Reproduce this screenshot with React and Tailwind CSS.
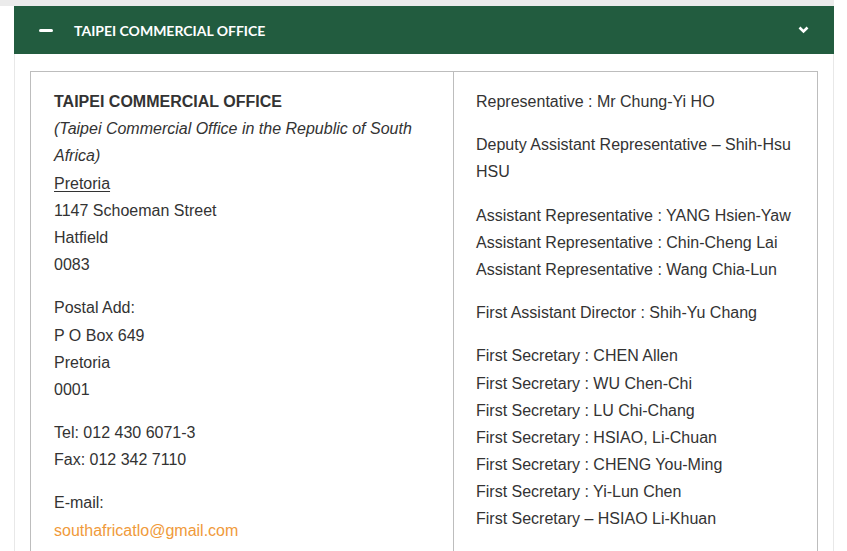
import React from 'react';

const leftBlocks = [
  [
    <strong key="t" className="font-bold">TAIPEI COMMERCIAL OFFICE</strong>,
    <em key="s">(Taipei Commercial Office in the Republic of South Africa)</em>,
    <span key="p" className="underline underline-offset-2">Pretoria</span>,
    '1147 Schoeman Street',
    'Hatfield',
    '0083',
  ],
  ['Postal Add:', 'P O Box 649', 'Pretoria', '0001'],
  ['Tel: 012 430 6071-3', 'Fax: 012 342 7110'],
  [
    'E-mail:',
    <a key="m" href="#" className="text-[#f09a3a]">southafricatlo@gmail.com</a>,
  ],
];

const rightBlocks = [
  ['Representative : Mr Chung-Yi HO'],
  ['Deputy Assistant Representative – Shih-Hsu HSU'],
  [
    'Assistant Representative : YANG Hsien-Yaw',
    'Assistant Representative : Chin-Cheng Lai',
    'Assistant Representative : Wang Chia-Lun',
  ],
  ['First Assistant Director : Shih-Yu Chang'],
  [
    'First Secretary : CHEN Allen',
    'First Secretary : WU Chen-Chi',
    'First Secretary : LU Chi-Chang',
    'First Secretary : HSIAO, Li-Chuan',
    'First Secretary : CHENG You-Ming',
    'First Secretary : Yi-Lun Chen',
    'First Secretary – HSIAO Li-Khuan',
  ],
];

const Blocks = ({ blocks }) => (
  <div className="flex flex-col gap-4">
    {blocks.map((lines, i) => (
      <p key={i}>
        {lines.map((line, j) => (
          <span key={j} className="block">
            {line}
          </span>
        ))}
      </p>
    ))}
  </div>
);

export default function App() {
  return (
    <div className="w-[847px] h-[551px] overflow-hidden bg-white">
      <div className="w-[834px] h-[6px] bg-[#ebebeb]" />
      <div className="ml-[14px] w-[820px]">
        {/* accordion header */}
        <div className="h-[48px] bg-[#225c3f] flex items-center pl-[25px] pr-[25px] text-white">
          <span className="w-[14px] h-[3px] bg-white rounded-sm" />
          <span
            className="ml-[21px] text-[14px] font-bold"
            style={{ fontFamily: 'Lato, "Open Sans", sans-serif' }}
          >
            TAIPEI COMMERCIAL OFFICE
          </span>
          <svg className="ml-auto" width="11" height="8" viewBox="0 0 11 8">
            <path d="M1.5 1.5 L5.5 5.5 L9.5 1.5" fill="none" stroke="white" strokeWidth="2.6" />
          </svg>
        </div>

        {/* accordion body */}
        <div className="border-x border-[#e8e8e8] pt-[17px] pl-[15px] pr-[15px] h-[600px]">
          <div
            className="grid grid-cols-[423px_1fr] border border-[#bdbdbd] text-[16px] leading-[1.7] text-[#333]"
            style={{ fontFamily: '"Liberation Sans", Arial, sans-serif' }}
          >
            <div className="border-r border-[#bdbdbd] px-[23px] pt-[16px] pb-6">
              <Blocks blocks={leftBlocks} />
            </div>
            <div className="px-[22px] pt-[16px] pb-6">
              <Blocks blocks={rightBlocks} />
            </div>
          </div>
        </div>
      </div>
    </div>
  );
}
